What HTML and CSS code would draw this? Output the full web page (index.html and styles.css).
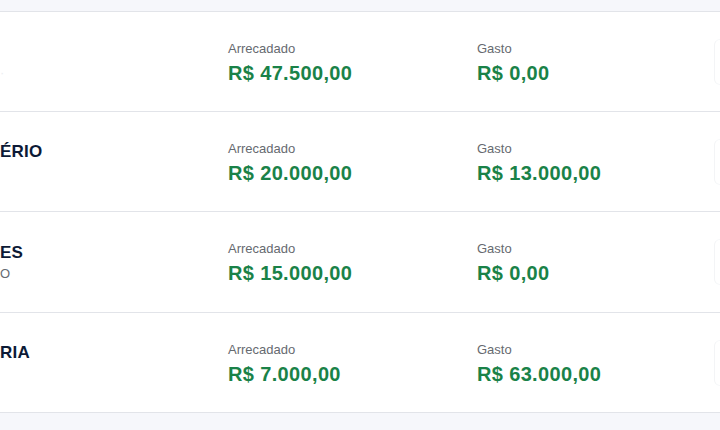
FILE: index.html
```html
<!DOCTYPE html>
<html lang="pt-BR">
<head>
    <meta charset="UTF-8">
    <meta name="viewport" content="width=device-width, initial-scale=1.0">
    <title>Orçamento</title>
    <link rel="stylesheet" href="styles.css">
</head>
<body>
    <div class="table">
        <div class="row">
            <div class="name">
                <span class="title"></span>
                <span class="sub faint">·</span>
            </div>
            <div class="cell">
                <span class="label">Arrecadado</span>
                <span class="value">R$ 47.500,00</span>
            </div>
            <div class="cell">
                <span class="label">Gasto</span>
                <span class="value">R$ 0,00</span>
            </div>
            <div class="action"></div>
        </div>
        <div class="row">
            <div class="name">
                <span class="title">ÉRIO</span>
                <span class="sub"></span>
            </div>
            <div class="cell">
                <span class="label">Arrecadado</span>
                <span class="value">R$ 20.000,00</span>
            </div>
            <div class="cell">
                <span class="label">Gasto</span>
                <span class="value">R$ 13.000,00</span>
            </div>
            <div class="action"></div>
        </div>
        <div class="row tall">
            <div class="name">
                <span class="title">ES</span>
                <span class="sub">O</span>
            </div>
            <div class="cell">
                <span class="label">Arrecadado</span>
                <span class="value">R$ 15.000,00</span>
            </div>
            <div class="cell">
                <span class="label">Gasto</span>
                <span class="value">R$ 0,00</span>
            </div>
            <div class="action"></div>
        </div>
        <div class="row">
            <div class="name">
                <span class="title">RIA</span>
                <span class="sub"></span>
            </div>
            <div class="cell">
                <span class="label">Arrecadado</span>
                <span class="value">R$ 7.000,00</span>
            </div>
            <div class="cell">
                <span class="label">Gasto</span>
                <span class="value">R$ 63.000,00</span>
            </div>
            <div class="action"></div>
        </div>
    </div>
</body>
</html>
```

FILE: styles.css
```css
body {
    margin: 0;
    font-family: "Liberation Sans", Arial, sans-serif;
    background: #f6f7fb;
}

.table {
    margin-top: 11px;
    background: #ffffff;
    border-top: 1px solid #e2e4e9;
    border-bottom: 1px solid #e2e4e9;
}

.row {
    display: grid;
    grid-template-columns: 228px 249px 1fr 6px;
    align-items: center;
    height: 99px;
    border-bottom: 1px solid #e2e4e9;
}

.row.tall {
    height: 100px;
}

.row:last-child {
    border-bottom: none;
}

.name,
.cell {
    display: flex;
    flex-direction: column;
}

.cell {
    padding-top: 2px;
}

.title {
    font-size: 17px;
    font-weight: bold;
    line-height: 20px;
    min-height: 20px;
    color: #0c1a36;
    letter-spacing: 0.2px;
}

.sub {
    margin-top: 3px;
    font-size: 13px;
    line-height: 16px;
    min-height: 16px;
    color: #666b73;
}

.faint {
    color: #eceef1;
}

.label {
    font-size: 13px;
    line-height: 16px;
    color: #666a70;
}

.value {
    margin-top: 4px;
    font-size: 20px;
    font-weight: bold;
    line-height: 24px;
    color: #1a8248;
    letter-spacing: 0.35px;
}

.action {
    height: 44px;
    border-left: 1px solid #f3f4f6;
    border-top: 1px solid #f7f8fa;
    border-bottom: 1px solid #f7f8fa;
    border-radius: 6px 0 0 6px;
}
```
